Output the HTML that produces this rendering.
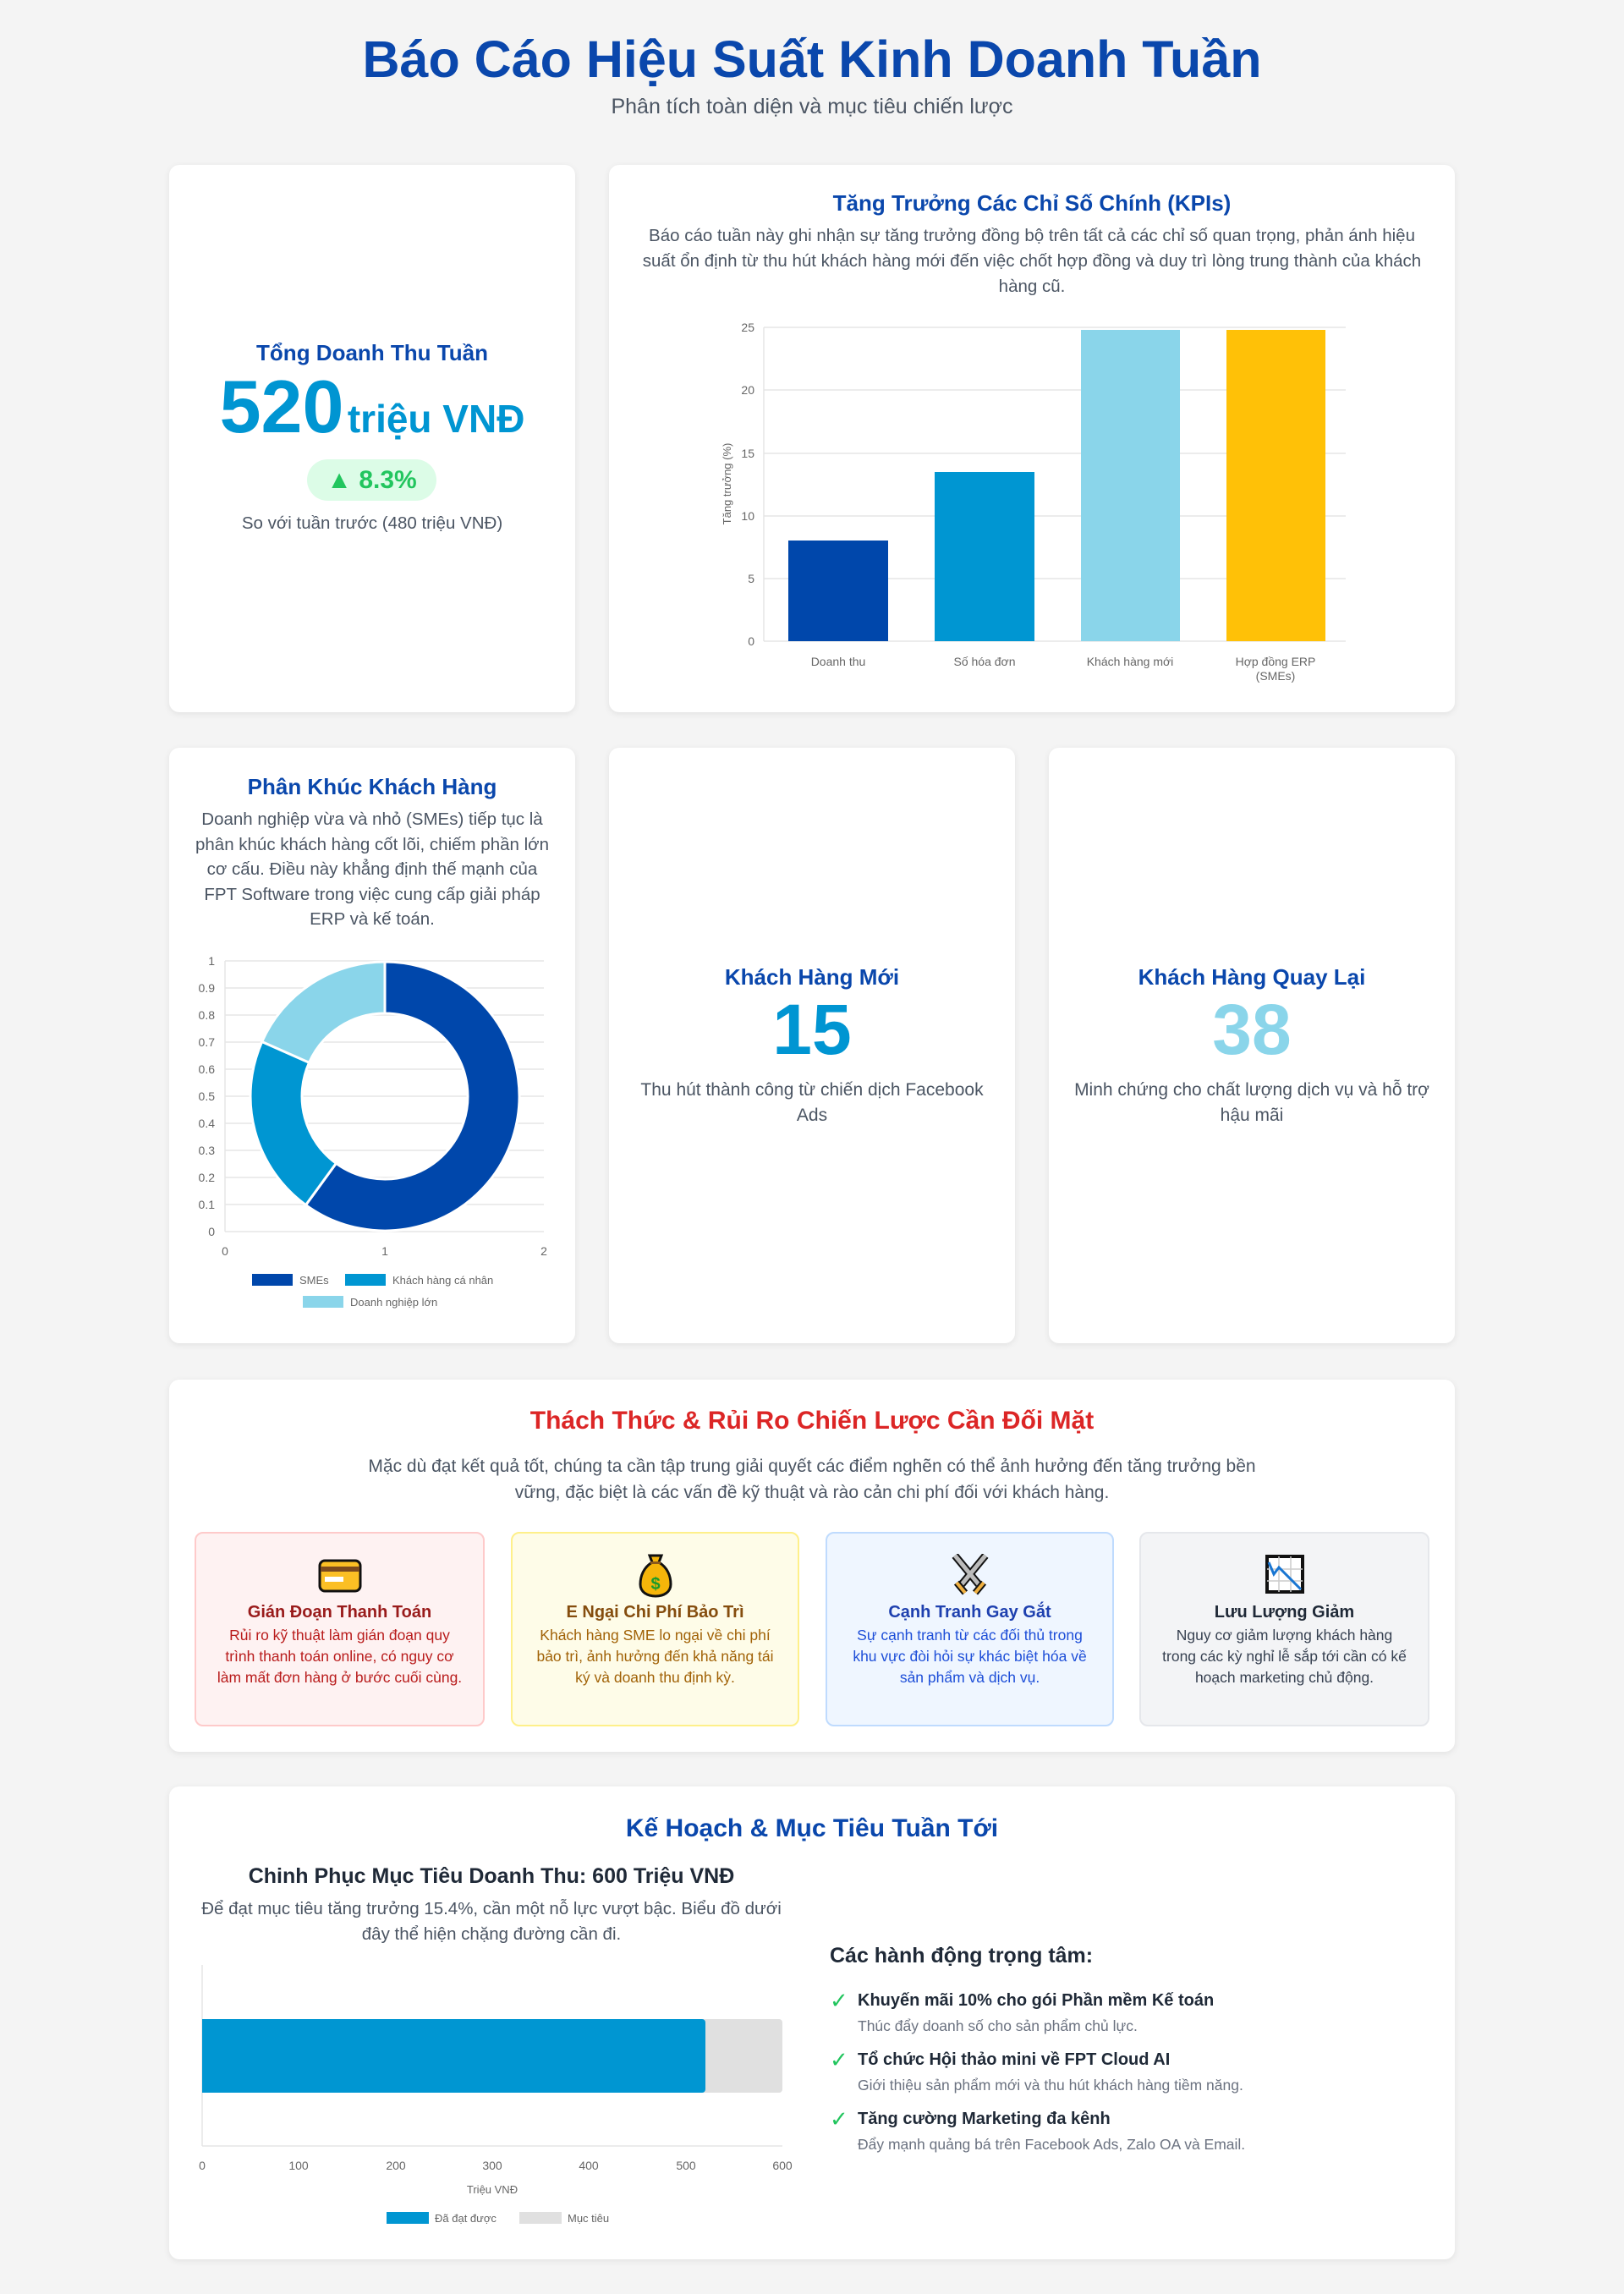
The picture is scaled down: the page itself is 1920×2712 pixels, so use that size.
<!DOCTYPE html>
<html><head><meta charset="utf-8"><style>
*{margin:0;padding:0;box-sizing:border-box}
body{width:1920px;height:2712px;background:#f4f4f4;font-family:"Liberation Sans",sans-serif;position:relative;overflow:hidden;color:#4b5563}
.a{position:absolute}
.card{position:absolute;background:#fff;border-radius:12px;box-shadow:0 2px 8px rgba(0,0,0,.08)}
.c{text-align:center}
.blue{color:#0a47ac;font-weight:bold}
.box{position:absolute;border:2px solid;border-radius:10px;text-align:center}
.box h4{position:absolute;left:0;right:0;top:82px;font-size:20px}
.box p{position:absolute;left:22px;right:22px;top:108px;font-size:17.5px;line-height:25px}
.box svg{position:absolute;left:50%;top:24px;transform:translateX(-50%)}
</style></head><body>
<div class="a c" style="left:0;width:1920px;top:30px;font-size:61px;font-weight:bold;color:#0a47ac;line-height:80px">Báo Cáo Hiệu Suất Kinh Doanh Tuần</div>
<div class="a c" style="left:0;width:1920px;top:110px;font-size:25px;color:#4b5563;line-height:32px">Phân tích toàn diện và mục tiêu chiến lược</div>

<!-- row1 -->
<div class="card" style="left:200px;top:195px;width:480px;height:647px"></div>
<div class="a c blue" style="left:200px;width:480px;top:402px;font-size:26px">Tổng Doanh Thu Tuần</div>
<div class="a c" style="left:200px;width:480px;top:430px;color:#0095d2;font-weight:bold;white-space:nowrap"><span style="font-size:88px">520</span> <span style="font-size:46px">triệu VNĐ</span></div>
<div class="a c" style="left:363px;top:543px;width:153px;height:49px;border-radius:25px;background:#dcfce7;color:#22c55e;font-weight:bold;font-size:30px;line-height:49px">▲ 8.3%</div>
<div class="a c" style="left:200px;width:480px;top:607px;font-size:20.5px;color:#4b5563">So với tuần trước (480 triệu VNĐ)</div>

<div class="card" style="left:720px;top:195px;width:1000px;height:647px"></div>
<div class="a c blue" style="left:720px;width:1000px;top:225px;font-size:26px">Tăng Trưởng Các Chỉ Số Chính (KPIs)</div>
<div class="a c" style="left:750px;width:940px;top:264px;font-size:20.5px;line-height:30px">Báo cáo tuần này ghi nhận sự tăng trưởng đồng bộ trên tất cả các chỉ số quan trọng, phản ánh hiệu suất ổn định từ thu hút khách hàng mới đến việc chốt hợp đồng và duy trì lòng trung thành của khách hàng cũ.</div>
<svg class="a" style="left:0;top:0" width="1920" height="900" font-family="Liberation Sans" font-size="14" fill="#666">
<g stroke="#e5e5e5" stroke-width="1.5">
<line x1="903" y1="387" x2="1591" y2="387"/><line x1="903" y1="461" x2="1591" y2="461"/><line x1="903" y1="536" x2="1591" y2="536"/><line x1="903" y1="610" x2="1591" y2="610"/><line x1="903" y1="684" x2="1591" y2="684"/><line x1="903" y1="758" x2="1591" y2="758"/><line x1="903" y1="387" x2="903" y2="758"/></g>
<g text-anchor="end"><text x="892" y="392">25</text><text x="892" y="466">20</text><text x="892" y="541">15</text><text x="892" y="615">10</text><text x="892" y="689">5</text><text x="892" y="763">0</text></g>
<text transform="translate(864,572) rotate(-90)" text-anchor="middle" font-size="13">Tăng trưởng (%)</text>
<rect x="932" y="639" width="118" height="119" fill="#0047ab"/>
<rect x="1105" y="558" width="118" height="200" fill="#0096d2"/>
<rect x="1278" y="390" width="117" height="368" fill="#8ad5ea"/>
<rect x="1450" y="390" width="117" height="368" fill="#ffc107"/>
<g text-anchor="middle"><text x="991" y="787">Doanh thu</text><text x="1164" y="787">Số hóa đơn</text><text x="1336" y="787">Khách hàng mới</text><text x="1508" y="787">Hợp đồng ERP</text><text x="1508" y="804">(SMEs)</text></g>
</svg>

<!-- row2 -->
<div class="card" style="left:200px;top:884px;width:480px;height:704px"></div>
<div class="a c blue" style="left:200px;width:480px;top:915px;font-size:26px">Phân Khúc Khách Hàng</div>
<div class="a c" style="left:230px;width:420px;top:954px;font-size:20.5px;line-height:29.5px">Doanh nghiệp vừa và nhỏ (SMEs) tiếp tục là phân khúc khách hàng cốt lõi, chiếm phần lớn cơ cấu. Điều này khẳng định thế mạnh của FPT Software trong việc cung cấp giải pháp ERP và kế toán.</div>
<svg class="a" style="left:0;top:0" width="700" height="1600" font-family="Liberation Sans" font-size="14" fill="#666">
<g stroke="#e5e5e5" stroke-width="1.5">
<line x1="266" y1="1136" x2="643" y2="1136"/><line x1="266" y1="1168" x2="643" y2="1168"/><line x1="266" y1="1200" x2="643" y2="1200"/><line x1="266" y1="1232" x2="643" y2="1232"/><line x1="266" y1="1264" x2="643" y2="1264"/><line x1="266" y1="1296" x2="643" y2="1296"/><line x1="266" y1="1328" x2="643" y2="1328"/><line x1="266" y1="1360" x2="643" y2="1360"/><line x1="266" y1="1392" x2="643" y2="1392"/><line x1="266" y1="1424" x2="643" y2="1424"/><line x1="266" y1="1456" x2="643" y2="1456"/><line x1="266" y1="1136" x2="266" y2="1456"/></g>
<g text-anchor="end"><text x="254" y="1141">1</text><text x="254" y="1173">0.9</text><text x="254" y="1205">0.8</text><text x="254" y="1237">0.7</text><text x="254" y="1269">0.6</text><text x="254" y="1301">0.5</text><text x="254" y="1333">0.4</text><text x="254" y="1365">0.3</text><text x="254" y="1397">0.2</text><text x="254" y="1429">0.1</text><text x="254" y="1461">0</text></g>
<g text-anchor="middle"><text x="266" y="1484">0</text><text x="455" y="1484">1</text><text x="643" y="1484">2</text></g>
<g stroke="#fff" stroke-width="3">
<path d="M455,1137 A159,159 0 1 1 361.5,1424.6 L397.4,1375.3 A98,98 0 1 0 455,1198 Z" fill="#0047ab"/>
<path d="M361.5,1424.6 A159,159 0 0 1 309.7,1231.5 L365.5,1256.2 A98,98 0 0 0 397.4,1375.3 Z" fill="#0096d2"/>
<path d="M309.7,1231.5 A159,159 0 0 1 455,1137 L455,1198 A98,98 0 0 0 365.5,1256.2 Z" fill="#8ad5ea"/>
</g>
<rect x="298" y="1506" width="48" height="14" fill="#0047ab"/><text x="354" y="1518" font-size="13">SMEs</text>
<rect x="408" y="1506" width="48" height="14" fill="#0096d2"/><text x="464" y="1518" font-size="13">Khách hàng cá nhân</text>
<rect x="358" y="1532" width="48" height="14" fill="#8ad5ea"/><text x="414" y="1544" font-size="13">Doanh nghiệp lớn</text>
</svg>

<div class="card" style="left:720px;top:884px;width:480px;height:704px"></div>
<div class="a c blue" style="left:720px;width:480px;top:1140px;font-size:26px">Khách Hàng Mới</div>
<div class="a c" style="left:720px;width:480px;top:1170px;font-size:84px;font-weight:bold;color:#0095d2;line-height:94px">15</div>
<div class="a c" style="left:748px;width:424px;top:1274px;font-size:21px;line-height:30px">Thu hút thành công từ chiến dịch Facebook Ads</div>

<div class="card" style="left:1240px;top:884px;width:480px;height:704px"></div>
<div class="a c blue" style="left:1240px;width:480px;top:1140px;font-size:26px">Khách Hàng Quay Lại</div>
<div class="a c" style="left:1240px;width:480px;top:1170px;font-size:84px;font-weight:bold;color:#8ad5ea;line-height:94px">38</div>
<div class="a c" style="left:1270px;width:420px;top:1274px;font-size:21px;line-height:30px">Minh chứng cho chất lượng dịch vụ và hỗ trợ hậu mãi</div>

<!-- challenges -->
<div class="card" style="left:200px;top:1631px;width:1520px;height:440px"></div>
<div class="a c" style="left:200px;width:1520px;top:1663px;font-size:30px;font-weight:bold;color:#dc2626">Thách Thức &amp; Rủi Ro Chiến Lược Cần Đối Mặt</div>
<div class="a c" style="left:420px;width:1080px;top:1718px;font-size:21px;line-height:31px">Mặc dù đạt kết quả tốt, chúng ta cần tập trung giải quyết các điểm nghẽn có thể ảnh hưởng đến tăng trưởng bền vững, đặc biệt là các vấn đề kỹ thuật và rào cản chi phí đối với khách hàng.</div>

<div class="box" style="left:230px;top:1811px;width:343px;height:230px;background:#fef2f2;border-color:#fecaca">
<svg width="52" height="40" viewBox="0 0 52 40" style="top:30px"><rect x="2" y="2" width="48" height="36" rx="6" fill="#fbbf24" stroke="#111" stroke-width="3"/><rect x="3" y="9" width="46" height="6" fill="#7c4a1e"/><rect x="8" y="21" width="22" height="6" fill="#fff"/></svg>
<h4 style="color:#991b1b">Gián Đoạn Thanh Toán</h4><p style="color:#b91c1c">Rủi ro kỹ thuật làm gián đoạn quy trình thanh toán online, có nguy cơ làm mất đơn hàng ở bước cuối cùng.</p></div>

<div class="box" style="left:604px;top:1811px;width:341px;height:230px;background:#fefce8;border-color:#fef08a">
<svg width="40" height="52" viewBox="0 0 40 52"><path d="M13 2h14l-3 8c10 6 14 16 14 26 0 9-8 14-18 14S2 45 2 36C2 26 6 16 16 10z" fill="#f5b50a" stroke="#111" stroke-width="3"/><rect x="14" y="9" width="12" height="3" fill="#8a5a1c"/><text x="20" y="42" text-anchor="middle" font-size="20" font-weight="bold" fill="#1a9a2a" font-family="Liberation Sans">$</text></svg>
<h4 style="color:#854d0e">E Ngại Chi Phí Bảo Trì</h4><p style="color:#a16207">Khách hàng SME lo ngại về chi phí bảo trì, ảnh hưởng đến khả năng tái ký và doanh thu định kỳ.</p></div>

<div class="box" style="left:976px;top:1811px;width:341px;height:230px;background:#eff6ff;border-color:#bfdbfe">
<svg width="52" height="52" viewBox="0 0 52 52"><path d="M8 2l28 34M44 2L16 36" stroke="#111" stroke-width="9"/><path d="M8 2l28 34M44 2L16 36" stroke="#bbb" stroke-width="5"/><path d="M10 34l10 12M42 34L32 46" stroke="#111" stroke-width="8"/><path d="M10 34l10 12M42 34L32 46" stroke="#f0b040" stroke-width="4"/></svg>
<h4 style="color:#1e40af">Cạnh Tranh Gay Gắt</h4><p style="color:#1d4ed8">Sự cạnh tranh từ các đối thủ trong khu vực đòi hỏi sự khác biệt hóa về sản phẩm và dịch vụ.</p></div>

<div class="box" style="left:1347px;top:1811px;width:343px;height:230px;background:#f3f4f6;border-color:#e5e7eb">
<svg width="48" height="48" viewBox="0 0 48 48"><rect x="3" y="3" width="42" height="42" fill="#fff" stroke="#111" stroke-width="4"/><path d="M3 18h42M3 32h42M17 3v42M31 3v42" stroke="#ccc" stroke-width="1.5"/><path d="M5 10l6 14 6-8 26 26" stroke="#1976d2" stroke-width="3" fill="none"/></svg>
<h4 style="color:#1f2937">Lưu Lượng Giảm</h4><p style="color:#374151">Nguy cơ giảm lượng khách hàng trong các kỳ nghỉ lễ sắp tới cần có kế hoạch marketing chủ động.</p></div>

<!-- plan -->
<div class="card" style="left:200px;top:2112px;width:1520px;height:559px"></div>
<div class="a c blue" style="left:200px;width:1520px;top:2145px;font-size:30px">Kế Hoạch &amp; Mục Tiêu Tuần Tới</div>
<div class="a c" style="left:230px;width:702px;top:2204px;font-size:25px;font-weight:bold;color:#1f2937">Chinh Phục Mục Tiêu Doanh Thu: 600 Triệu VNĐ</div>
<div class="a c" style="left:230px;width:702px;top:2242px;font-size:20.5px;line-height:30px">Để đạt mục tiêu tăng trưởng 15.4%, cần một nỗ lực vượt bậc. Biểu đồ dưới đây thể hiện chặng đường cần đi.</div>
<svg class="a" style="left:0;top:0" width="1000" height="2712" font-family="Liberation Sans" font-size="14" fill="#666">
<line x1="239" y1="2323" x2="239" y2="2537" stroke="#e5e5e5" stroke-width="1.5"/>
<line x1="239" y1="2537" x2="925" y2="2537" stroke="#e5e5e5" stroke-width="1.5"/>
<rect x="239" y="2387" width="686" height="87" rx="4" fill="#e0e0e0"/>
<rect x="239" y="2387" width="595" height="87" rx="4" fill="#0096d2"/>
<rect x="239" y="2387" width="20" height="87" fill="#0096d2"/>
<g text-anchor="middle"><text x="239" y="2565">0</text><text x="353" y="2565">100</text><text x="468" y="2565">200</text><text x="582" y="2565">300</text><text x="696" y="2565">400</text><text x="811" y="2565">500</text><text x="925" y="2565">600</text><text x="582" y="2593" font-size="13">Triệu VNĐ</text></g>
<rect x="457" y="2615" width="50" height="14" fill="#0096d2"/><text x="514" y="2627" font-size="13">Đã đạt được</text>
<rect x="614" y="2615" width="50" height="14" fill="#e0e0e0"/><text x="671" y="2627" font-size="13">Mục tiêu</text>
</svg>
<div class="a" style="left:981px;top:2298px;font-size:25px;font-weight:bold;color:#1f2937">Các hành động trọng tâm:</div>
<div class="a" style="left:981px;top:2350px;font-size:26px;color:#22c55e;line-height:30px">✓</div>
<div class="a" style="left:1014px;top:2354px;font-size:20px;font-weight:bold;color:#1f2937">Khuyến mãi 10% cho gói Phần mềm Kế toán</div>
<div class="a" style="left:1014px;top:2385px;font-size:17.5px;color:#6b7280">Thúc đẩy doanh số cho sản phẩm chủ lực.</div>
<div class="a" style="left:981px;top:2420px;font-size:26px;color:#22c55e;line-height:30px">✓</div>
<div class="a" style="left:1014px;top:2424px;font-size:20px;font-weight:bold;color:#1f2937">Tổ chức Hội thảo mini về FPT Cloud AI</div>
<div class="a" style="left:1014px;top:2455px;font-size:17.5px;color:#6b7280">Giới thiệu sản phẩm mới và thu hút khách hàng tiềm năng.</div>
<div class="a" style="left:981px;top:2490px;font-size:26px;color:#22c55e;line-height:30px">✓</div>
<div class="a" style="left:1014px;top:2494px;font-size:20px;font-weight:bold;color:#1f2937">Tăng cường Marketing đa kênh</div>
<div class="a" style="left:1014px;top:2525px;font-size:17.5px;color:#6b7280">Đẩy mạnh quảng bá trên Facebook Ads, Zalo OA và Email.</div>
</body></html>
